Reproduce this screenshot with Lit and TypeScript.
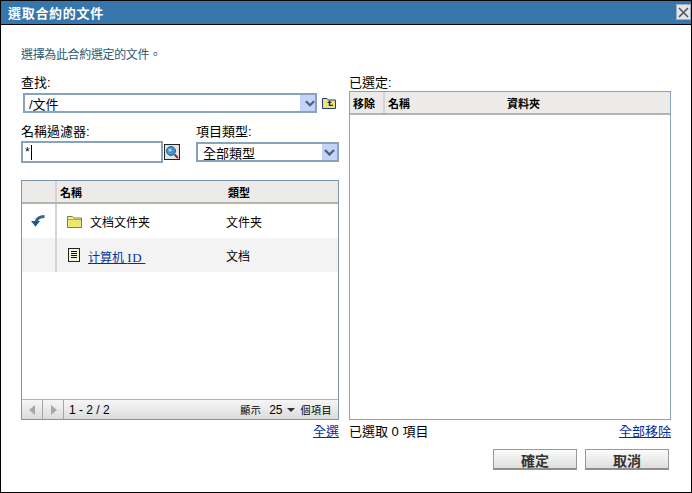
import { LitElement, html, css, svg } from "lit";
import { customElement } from "lit/decorators.js";

const chevron = svg`<svg class="chev" width="11" height="7" viewBox="0 0 11 7"><path d="M1 1 L5.5 5.5 L10 1" fill="none" stroke="#4d6185" stroke-width="2.4"/></svg>`;

@customElement("app-root")
export class AppRoot extends LitElement {
  static styles = css`
    :host { display: block; width: 692px; height: 493px; font-family: "Liberation Sans", "Noto Sans CJK TC", sans-serif; font-size: 12px; color: #000; }
    * { box-sizing: border-box; }
    .dialog { width: 692px; height: 493px; border: 1px solid #000; background: #fff; display: flex; flex-direction: column; }
    .title { height: 23px; flex: none; background: #3776ab; border-bottom: 1px solid #000; box-sizing: content-box; display: flex; align-items: center; justify-content: space-between; padding: 0 0 0 7px; color: #fff; font-weight: bold; font-size: 13px; letter-spacing: .7px; }
    .close { width: 15px; height: 16px; margin-top: -1px; background: #dfe4e8; border: 1px solid #9eb0c0; display: flex; align-items: center; justify-content: center; }
    .body { flex: 1; padding: 22px 20px 0 20px; display: flex; flex-direction: column; }
    .intro { height: 16px; line-height: 16px; color: #2c5a73; margin-bottom: 12px; letter-spacing: -.35px; flex: none; }
    .cols { display: flex; gap: 10px; height: 365px; flex: none; }
    .left { width: 318px; display: flex; flex-direction: column; }
    .right { width: 322px; display: flex; flex-direction: column; }
    .label { height: 16px; line-height: 16px; font-size: 13px; flex: none; }
    .sel { display: flex; align-items: center; justify-content: space-between; border: 2px solid #88a4bd; background: #fff; padding: 0 0 0 4px; font-size: 13px; }
    .sel .btn { width: 15px; height: 16px; background: #c5d3f6; display: flex; align-items: center; justify-content: center; }
    .look { display: flex; align-items: center; margin: 2px 0 0 2px; flex: none; }
    .look .sel { width: 294px; height: 20px; }
    .look svg { margin-left: 5px; }
    .filters { display: flex; margin-top: 11px; flex: none; }
    .f1 { width: 175px; }
    .f1 .label, .f2 .label { height: 17px; }
    .f1row { display: flex; align-items: flex-end; }
    .input { width: 142px; height: 22px; border: 2px solid #88a4bd; display: flex; align-items: center; padding-left: 2px; }
    .caret { width: 1px; height: 15px; background: #000; margin-left: 1px; }
    .search { width: 16px; height: 16px; margin: 0 0 3px 1px; display: block; }
    .f2 .sel { width: 143px; height: 20px; margin-top: 1px; padding-left: 5px; }
    .table { border: 1px solid #7d96a8; display: flex; flex-direction: column; background: #fff; }
    .tl { margin-top: 17px; height: 240px; flex: none; }
    .tr { flex: 1; border-color: #88a4bd; }
    .head { height: 23px; flex: none; background: #ecebe9; border-bottom: 2px solid #b5b5b0; display: flex; align-items: center; font-size: 11px; font-weight: bold; }
    .row { height: 34px; flex: none; display: flex; align-items: center; }
    .row.alt { background: #f3f3f3; }
    .c0 { width: 35px; height: 100%; flex: none; border-right: 2px solid #d4d4d0; display: flex; align-items: center; justify-content: center; padding-right: 1px; }
    .c1 { width: 169px; flex: none; display: flex; align-items: center; padding-left: 10px; }
    .head .c1 { padding-left: 3px; }
    .head .c2 { padding-left: 2px; }
    .row svg.ic { flex: none; }
    .folder-t { margin-left: 8px; }
    .doc-t { margin: 3px 0 0 8px; }
    .id { font-family: "Liberation Serif", serif; font-size: 13px; letter-spacing: .5px; }
    a { color: #003399; text-decoration: underline; }
    .spacer { flex: 1; }
    .foot { height: 20px; flex: none; border-top: 1px solid #adb5b8; background: linear-gradient(#f6f6f6, #dcdcdc); display: flex; align-items: center; }
    .nav { width: 21px; height: 100%; border-right: 1px solid #a5a5a5; display: flex; align-items: center; justify-content: center; }
    .range { margin-left: 5px; }
    .pager { margin-left: auto; padding-right: 6px; display: flex; align-items: center; font-size: 10px; letter-spacing: .5px; }
    .num { margin-left: 8px; font-size: 12px; letter-spacing: 0; }
    .tri { width: 0; height: 0; border: 4px solid transparent; border-top: 4px solid #333; border-bottom: 0; margin: 0 6px 0 4px; }
    .under { height: 20px; flex: none; display: flex; align-items: center; justify-content: space-between; font-size: 13px; }
    .under.l { justify-content: flex-end; }
    .rh0 { width: 35px; height: 100%; flex: none; border-right: 2px solid #d4d4d0; display: flex; align-items: center; padding-left: 3px; }
    .rh1 { width: 122px; flex: none; padding-left: 3px; }
    .actions { display: flex; justify-content: flex-end; gap: 8px; padding-right: 2px; margin-top: 9px; }
    button { width: 84px; height: 21px; padding: 0; border: 1px solid #999; border-bottom: 2px solid #8e8e8a; background: linear-gradient(#fbfbfb, #dedfdd); font: bold 14px "Liberation Sans", "Noto Sans CJK TC", sans-serif; color: #333; }
  `;

  render() {
    return html`<div class="dialog">
      <div class="title"><span>選取合約的文件</span>
        <div class="close"><svg width="11" height="11" viewBox="0 0 11 11"><path d="M1 1 L10 10 M10 1 L1 10" stroke="#555" stroke-width="1.6"/></svg></div>
      </div>
      <div class="body">
        <div class="intro">選擇為此合約選定的文件。</div>
        <div class="cols">
          <div class="left">
            <div class="label">查找:</div>
            <div class="look">
              <div class="sel"><span>/文件</span><div class="btn">${chevron}</div></div>
              <svg width="14" height="12" viewBox="0 0 14 12"><path d="M.5 11.5V1.5H5L6.5 3H13.5V11.5Z" fill="#efe27a" stroke="#1f3d78"/><path d="M7.5 3.5L5 6H6.8V9H11V7.8H8.2V6H10Z" fill="#1f3d1f"/></svg>
            </div>
            <div class="filters">
              <div class="f1">
                <div class="label">名稱過濾器:</div>
                <div class="f1row">
                  <div class="input"><span>*</span><span class="caret"></span></div>
                  <svg class="search" viewBox="0 0 16 16"><rect x=".5" y=".5" width="15" height="15" fill="#e4e4e0" stroke="#222"/><circle cx="7" cy="7" r="4.5" fill="#3f94d0" stroke="#2a5f8a"/><circle cx="6" cy="6" r="1.6" fill="#a9d6f2"/><path d="M10.5 10.5L14 14" stroke="#c8102e" stroke-width="2"/></svg>
                </div>
              </div>
              <div class="f2">
                <div class="label">項目類型:</div>
                <div class="sel"><span>全部類型</span><div class="btn">${chevron}</div></div>
              </div>
            </div>
            <div class="table tl">
              <div class="head"><div class="c0"></div><div class="c1">名稱</div><div class="c2">類型</div></div>
              <div class="row">
                <div class="c0"><svg class="ic" width="14" height="12" viewBox="0 0 14 12"><path d="M13.5 1.6C9 1.6 6 3 5.2 7" fill="none" stroke="#2c6596" stroke-width="3"/><path d="M0 6H9L4.5 11.8Z" fill="#1f5a8c"/></svg></div>
                <div class="c1"><svg class="ic" width="15" height="13" viewBox="0 0 15 13"><path d="M.5 12.5V1.5H5.5L7 3H14.5V12.5Z" fill="#f6f08a" stroke="#7e7a56"/><path d="M1.5 5H13.5V11.5H1.5Z" fill="#ece76a"/><path d="M1 4.5H14" stroke="#a8a46e"/></svg><span class="folder-t">文档文件夹</span></div>
                <div class="c2">文件夹</div>
              </div>
              <div class="row alt">
                <div class="c0"></div>
                <div class="c1"><svg class="ic" style="margin-left:1px" width="12" height="14" viewBox="0 0 12 14"><rect x=".5" y=".5" width="11" height="13" fill="#f5f5e0" stroke="#222"/><path d="M3 3.5H9M3 5.5H9M3 7.5H9M3 9.5H9" stroke="#111"/></svg><a class="doc-t" href="#">计算机 <span class="id">ID</span>&nbsp;</a></div>
                <div class="c2">文档</div>
              </div>
              <div class="spacer"></div>
              <div class="foot">
                <div class="nav"><svg width="7" height="10" viewBox="0 0 7 10"><path d="M6 0V10L0 5Z" fill="#a8a8a8"/></svg></div>
                <div class="nav"><svg width="7" height="10" viewBox="0 0 7 10"><path d="M1 0V10L7 5Z" fill="#a8a8a8"/></svg></div>
                <span class="range">1 - 2 / 2</span>
                <div class="pager"><span>顯示</span><span class="num">25</span><span class="tri"></span><span>個項目</span></div>
              </div>
            </div>
            <div class="under l"><a href="#">全選</a></div>
          </div>
          <div class="right">
            <div class="label">已選定:</div>
            <div class="table tr">
              <div class="head"><div class="rh0">移除</div><div class="rh1">名稱</div><div>資料夾</div></div>
            </div>
            <div class="under"><span>已選取 0 項目</span><a href="#">全部移除</a></div>
          </div>
        </div>
        <div class="actions"><button>確定</button><button>取消</button></div>
      </div>
    </div>`;
  }
}
